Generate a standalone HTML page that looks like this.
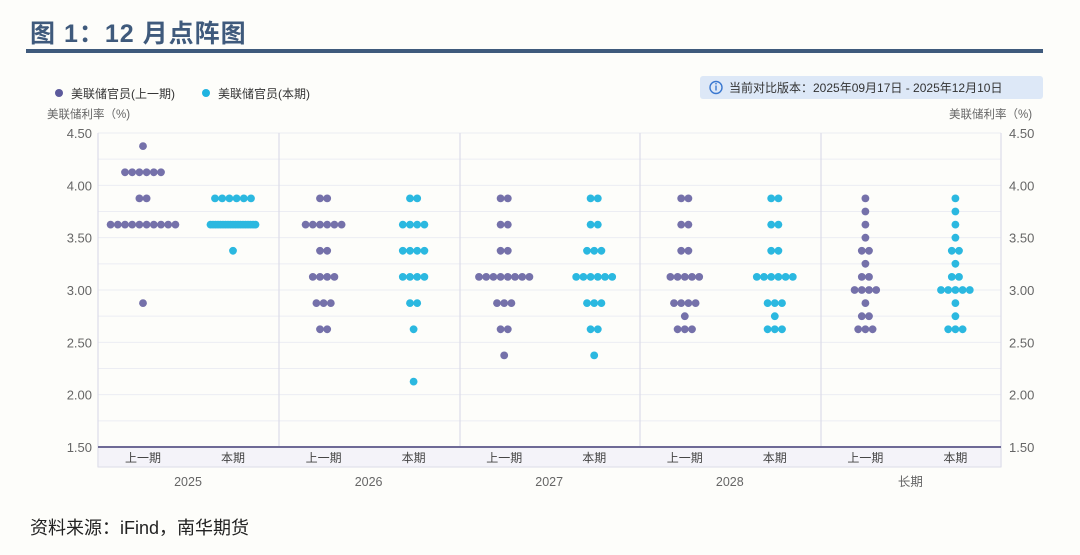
<!DOCTYPE html>
<html><head><meta charset="utf-8"><style>
body{margin:0;background:#fdfdfa;width:1080px;height:555px;overflow:hidden;font-family:"Liberation Sans","Noto Sans CJK SC",sans-serif;}
.t{position:absolute;left:30px;top:14px;font-size:25px;font-weight:bold;color:#3f5a7c;letter-spacing:1px}
.bar{position:absolute;left:26px;top:49px;width:1017px;height:4px;background:#3f5a7c}
.src{position:absolute;left:30px;top:514px;font-size:18px;color:#222}
</style></head><body>
<div class="t">图 1：12 月点阵图</div>
<div class="bar"></div>
<svg id="s" width="1080" height="555" style="position:absolute;left:0;top:0" font-family="Liberation Sans, Noto Sans CJK SC, sans-serif">
<circle cx="59" cy="93" r="4" fill="#5c5a9c"/><text x="71" y="98" font-size="12" fill="#333">美联储官员(上一期)</text>
<circle cx="206" cy="93" r="4" fill="#1fb3e0"/><text x="218" y="98" font-size="12" fill="#333">美联储官员(本期)</text>
<rect x="700" y="76" width="343" height="23" rx="3" fill="#dde8f7"/>
<circle cx="716" cy="87.5" r="6" fill="none" stroke="#3a78d0" stroke-width="1.4"/>
<rect x="715.3" y="85.5" width="1.4" height="5" fill="#3a78d0"/><rect x="715.3" y="83" width="1.4" height="1.4" fill="#3a78d0"/>
<text x="729" y="92" font-size="12" fill="#333">当前对比版本：2025年09月17日 - 2025年12月10日</text>
<text x="47" y="118" font-size="11.5" fill="#666">美联储利率（%)</text>
<text x="949" y="118" font-size="11.5" fill="#666">美联储利率（%)</text>
<g id="g"></g>
</svg>
<div class="src">资料来源：iFind，南华期货</div>
<script>
var g=document.getElementById('g'),h='';
function Y(v){return 133+(4.5-v)*104.67;}
for(var i=0;i<=12;i++){var v=4.5-i*0.25,y=Y(v);h+='<line x1="98" x2="1001" y1="'+y+'" y2="'+y+'" stroke="#ecedf3" stroke-width="1"/>';
if(i%2==0){var s=v.toFixed(2);h+='<text x="92" y="'+(y+5)+'" font-size="13" fill="#666" text-anchor="end">'+s+'</text><text x="1009" y="'+(y+5)+'" font-size="13" fill="#666">'+s+'</text>';}}
var xs=[98,279,460,640,821,1001];
xs.forEach(function(x){h+='<line x1="'+x+'" x2="'+x+'" y1="133" y2="467" stroke="#dcdce8" stroke-width="1.2"/>';});
h+='<rect x="98" y="447" width="903" height="20" fill="#f4f3f9" stroke="#dcdce8"/><line x1="98" x2="1001" y1="447" y2="447" stroke="#6e6a96" stroke-width="2"/>';
var yrs=['2025','2026','2027','2028','长期'];
for(var k=0;k<5;k++){var c=98+k*180.6;h+='<text x="'+(c+45)+'" y="462" font-size="12" fill="#444" text-anchor="middle">上一期</text><text x="'+(c+135)+'" y="462" font-size="12" fill="#444" text-anchor="middle">本期</text><text x="'+(c+90)+'" y="486" font-size="12.5" fill="#666" text-anchor="middle">'+yrs[k]+'</text>';}
var D=[
[[4.375,1],[4.125,6],[3.875,2],[3.625,10],[2.875,1]],
[[3.875,6],[3.625,19],[3.375,1]],
[[3.875,2],[3.625,6],[3.375,2],[3.125,4],[2.875,3],[2.625,2]],
[[3.875,2],[3.625,4],[3.375,4],[3.125,4],[2.875,2],[2.625,1],[2.125,1]],
[[3.875,2],[3.625,2],[3.375,2],[3.125,8],[2.875,3],[2.625,2],[2.375,1]],
[[3.875,2],[3.625,2],[3.375,3],[3.125,6],[2.875,3],[2.625,2],[2.375,1]],
[[3.875,2],[3.625,2],[3.375,2],[3.125,5],[2.875,4],[2.75,1],[2.625,3]],
[[3.875,2],[3.625,2],[3.375,2],[3.125,6],[2.875,3],[2.75,1],[2.625,3]],
[[3.875,1],[3.75,1],[3.625,1],[3.5,1],[3.375,2],[3.25,1],[3.125,2],[3.0,4],[2.875,1],[2.75,2],[2.625,3]],
[[3.875,1],[3.75,1],[3.625,1],[3.5,1],[3.375,2],[3.25,1],[3.125,2],[3.0,5],[2.875,1],[2.75,1],[2.625,3]]];
D.forEach(function(arr,j){var cx=98+Math.floor(j/2)*180.6+(j%2?135:45),col=j%2?'#2bb8e0':'#7571aa';
arr.forEach(function(p){var n=p[1],sp=n>12?2.5:7.2,y=Y(p[0]);for(var m=0;m<n;m++){var x=cx+(m-(n-1)/2)*sp;h+='<circle cx="'+x.toFixed(1)+'" cy="'+y.toFixed(1)+'" r="3.9" fill="'+col+'"/>';}});});
g.innerHTML=h;
</script>
</body></html>
